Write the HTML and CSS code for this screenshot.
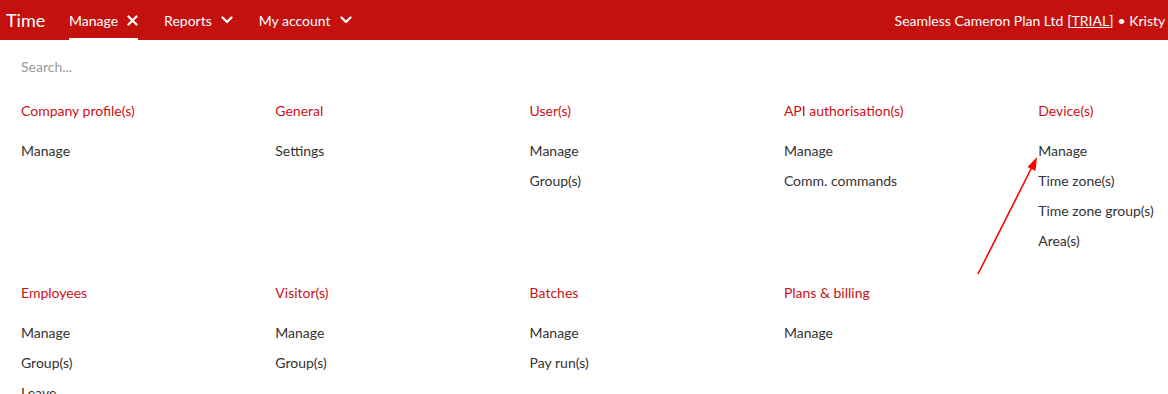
FILE: index.html
```html
<!DOCTYPE html>
<html>
<head>
<meta charset="utf-8">
<link rel="stylesheet" href="styles.css">
</head>
<body>
<header class="topbar">
  <div class="brand">Time</div>
  <nav class="nav">
    <div class="nav-item active">Manage
      <svg class="ic" width="11" height="11" viewBox="0 0 11 11"><path d="M1.5 1.5L9.5 9.5M9.5 1.5L1.5 9.5" stroke="#fff" stroke-width="2.2" stroke-linecap="round"/></svg>
    </div>
    <div class="nav-item">Reports
      <svg class="ic" width="12" height="8" viewBox="0 0 12 8"><path d="M1.5 1.5L6 6L10.5 1.5" fill="none" stroke="#fff" stroke-width="2.2" stroke-linecap="round" stroke-linejoin="round"/></svg>
    </div>
    <div class="nav-item">My account
      <svg class="ic" width="12" height="8" viewBox="0 0 12 8"><path d="M1.5 1.5L6 6L10.5 1.5" fill="none" stroke="#fff" stroke-width="2.2" stroke-linecap="round" stroke-linejoin="round"/></svg>
    </div>
  </nav>
  <div class="account">Seamless Cameron Plan Ltd <span class="trial">[<u>TRIAL</u>]</span> • Kristy (Admin)</div>
</header>
<main class="content">
  <div class="search">Search...</div>
  <div class="grid">
    <section class="group"><h3>Company profile(s)</h3><ul><li>Manage</li></ul></section>
    <section class="group"><h3>General</h3><ul><li>Settings</li></ul></section>
    <section class="group"><h3>User(s)</h3><ul><li>Manage</li><li>Group(s)</li></ul></section>
    <section class="group"><h3>API authorisation(s)</h3><ul><li>Manage</li><li>Comm. commands</li></ul></section>
    <section class="group"><h3>Device(s)</h3><ul><li>Manage</li><li>Time zone(s)</li><li>Time zone group(s)</li><li>Area(s)</li></ul></section>
    <section class="group"><h3>Employees</h3><ul><li>Manage</li><li>Group(s)</li><li>Leave</li></ul></section>
    <section class="group"><h3>Visitor(s)</h3><ul><li>Manage</li><li>Group(s)</li></ul></section>
    <section class="group"><h3>Batches</h3><ul><li>Manage</li><li>Pay run(s)</li></ul></section>
    <section class="group"><h3>Plans &amp; billing</h3><ul><li>Manage</li></ul></section>
  </div>
</main>
<svg class="annot" width="1168" height="394" viewBox="0 0 1168 394">
  <line x1="978" y1="274" x2="1032" y2="167" stroke="#f00" stroke-width="1.6"/>
  <polygon points="1037,157 1035.5,171 1027.5,167" fill="#f00"/>
</svg>
</body>
</html>
```
FILE: styles.css
```css
html, body {
  margin: 0;
  padding: 0;
}
body {
  font-family: Lato, "Open Sans", sans-serif;
  background: #fff;
  width: 1168px;
  height: 394px;
  overflow: hidden;
  position: relative;
}
.topbar {
  height: 40px;
  background: #c4110d;
  color: #fff;
  display: flex;
  align-items: stretch;
  white-space: nowrap;
  overflow: hidden;
}
.brand {
  font-size: 18px;
  padding-left: 6px;
  width: 63px;
  flex-shrink: 0;
  display: flex;
  align-items: center;
}
.nav {
  display: flex;
  gap: 26px;
  flex-shrink: 0;
}
.nav-item {
  font-size: 14px;
  display: flex;
  align-items: center;
  gap: 9px;
  box-sizing: border-box;
  border-bottom: 2px solid transparent;
  padding-top: 2px;
}
.nav-item.active {
  border-bottom-color: #fff;
}
.ic {
  display: block;
}
.account {
  margin-left: 543px;
  flex-shrink: 0;
  font-size: 14px;
  display: flex;
  align-items: center;
  gap: 4px;
}
.trial {
  color: #fff;
}
.content {
  padding: 0 0 0 21px;
}
.search {
  font-size: 14px;
  color: #999;
  height: 54px;
  line-height: 54px;
}
.grid {
  display: grid;
  grid-template-columns: repeat(5, 254.3px);
  row-gap: 15px;
}
.group h3 {
  margin: 0;
  font-size: 14px;
  font-weight: 400;
  color: #cc1016;
  height: 30px;
  line-height: 34px;
}
.group ul {
  list-style: none;
  margin: 0;
  padding: 17px 0 0;
}
.group li {
  font-size: 14px;
  color: #333;
  height: 30px;
  line-height: 20px;
}
.annot {
  position: absolute;
  left: 0;
  top: 0;
  pointer-events: none;
}
```
